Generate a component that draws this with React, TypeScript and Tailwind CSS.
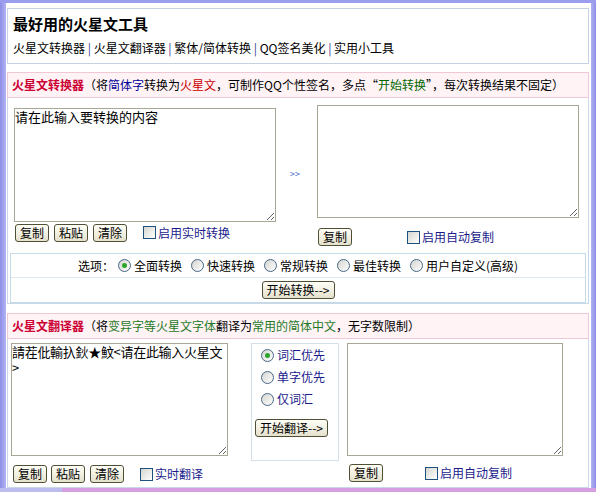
import React from 'react'

const cjk = "font-['Noto_Sans_CJK_SC','Noto_Sans',sans-serif]"

function Btn({ children, className = '' }: { children: React.ReactNode; className?: string }) {
  return (
    <button
      className={`h-[18px] px-[4px] rounded-[3px] border border-[#4f4f36] bg-linear-to-b from-[#fffff8] to-[#e4e1cc] text-[12px] leading-[14px] text-black ${className}`}
    >
      {children}
    </button>
  )
}

function Check({ label, className = '' }: { label: string; className?: string }) {
  return (
    <span className={`flex items-center gap-[2px] ${className}`}>
      <span className="w-[13px] h-[13px] border border-[#1c5180] bg-linear-to-br from-[#d6d6d0] to-white" />
      <span className="text-[12px] leading-[16px] text-[#1b1b8c]">{label}</span>
    </span>
  )
}

function Radio({ label, checked = false, tone = 'text-black' }: { label: string; checked?: boolean; tone?: string }) {
  return (
    <span className="flex items-center gap-[3px]">
      <span className="w-[13px] h-[13px] rounded-full border border-[#47678a] bg-linear-to-br from-[#d4d4ce] to-white flex items-center justify-center">
        {checked && <span className="w-[5px] h-[5px] rounded-full bg-[#2ca52c]" />}
      </span>
      <span className={`text-[12px] leading-[16px] ${tone}`}>{label}</span>
    </span>
  )
}

const area =
  "block border border-[#a4a894] bg-white p-0 text-[13px] leading-[16px] text-black outline-none font-['Noto_Sans_CJK_SC','Noto_Sans',sans-serif]"

export default function App() {
  return (
    <div className={`w-[596px] h-[492px] flex flex-col bg-white ${cjk}`}>
      <div className="h-[3px] bg-[#9d9df0]" />
      <div className="flex flex-1">
        <div className="w-[6px] bg-linear-to-r from-[#8d8de6] to-[#b3b3f3]" />

        <div className="flex-1 flex flex-col ml-[1px] mr-[2px]">
          {/* TOP */}
          <div className="mt-[5px] h-[56px] border border-[#c6d3e2] pl-[5px]">
            <div className="pt-[6px] text-[15px] leading-[18px] font-bold text-black">最好用的火星文工具</div>
            <div className="mt-[7px] text-[12px] leading-[16px] text-black">
              火星文转换器 <span className="text-[#3b3b8c]">|</span> 火星文翻译器{' '}
              <span className="text-[#3b3b8c]">|</span> 繁体/简体转换 <span className="text-[#3b3b8c]">|</span>{' '}
              QQ签名美化 <span className="text-[#3b3b8c]">|</span> 实用小工具
            </div>
          </div>

          {/* CONVERTER */}
          <div className="mt-[8px] h-[26px] border border-[#efc7d5] bg-[#fff3f6] pl-[4px] flex items-center text-[12px] leading-[16px] text-black whitespace-nowrap">
            <span className="font-bold text-[#cc0033]">火星文转换器</span>
            <span>（将</span>
            <span className="text-[#000099]">简体字</span>
            <span>转换为</span>
            <span className="text-[#cc0000]">火星文</span>
            <span>，可制作QQ个性签名，多点“</span>
            <span className="text-[#006600]">开始转换</span>
            <span>”，每次转换结果不固定）</span>
          </div>
          <div className="h-[206px] border border-t-0 border-[#c8d8e6] flex flex-col">
            <div className="h-[148px] flex items-start">
              <div className="ml-[6px] pt-[10px]">
                <textarea className={`${area} w-[262px] h-[114px]`} defaultValue="请在此输入要转换的内容" />
                <div className="mt-[1px] h-[19px] flex items-center">
                  <Btn className="ml-[1px]">复制</Btn>
                  <Btn className="ml-[5px]">粘贴</Btn>
                  <Btn className="ml-[5px]">清除</Btn>
                  <Check label="启用实时转换" className="ml-[16px]" />
                </div>
              </div>
              <div className="w-[41px] pt-[71px] pl-[14px] text-[9px] leading-[10px] text-[#3a66c4]">&gt;&gt;</div>
              <div className="pt-[7px]">
                <textarea className={`${area} w-[262px] h-[113px]`} />
                <div className="mt-[10px] h-[18px] flex items-center">
                  <Btn className="ml-[1px]">复制</Btn>
                  <Check label="启用自动复制" className="ml-[55px]" />
                </div>
              </div>
            </div>
            <div className="mt-[7px] mx-[2px] h-[50px] border border-[#c6dbe8] flex flex-col">
              <div className="h-[23px] flex items-center justify-center gap-[9px] text-[12px] leading-[16px] text-black">
                <span className="-mr-[5px]">选项：</span>
                <Radio label="全面转换" checked />
                <Radio label="快速转换" />
                <Radio label="常规转换" />
                <Radio label="最佳转换" />
                <Radio label="用户自定义(高级)" />
              </div>
              <div className="flex-1 border-t border-[#dbe6ee] flex items-center justify-center">
                <Btn className="px-[3px]">开始转换--&gt;</Btn>
              </div>
            </div>
          </div>

          {/* TRANSLATOR */}
          <div className="mt-[9px] h-[26px] border border-[#efc7d5] bg-[#fff3f6] pl-[4px] flex items-center text-[12px] leading-[16px] text-black whitespace-nowrap">
            <span className="font-bold text-[#cc0033]">火星文翻译器</span>
            <span>（将</span>
            <span className="text-[#1f7a1f]">变异字等火星文字体</span>
            <span>翻译为</span>
            <span className="text-[#1f7a1f]">常用的简体中文</span>
            <span>，无字数限制）</span>
          </div>
          <div className="h-[149px] border border-t-0 border-[#c8d8e6] flex items-start">
            <div className="ml-[3px] pt-[4px]">
              <textarea
                className={`${area} w-[217px] h-[113px] tracking-[-0.3px]`}
                defaultValue={'請茬仳輸扖鈥★魰<请在此输入火星文\n>'}
              />
              <div className="mt-[9px] h-[18px] flex items-center">
                <Btn className="ml-[2px]">复制</Btn>
                <Btn className="ml-[4px]">粘贴</Btn>
                <Btn className="ml-[5px]">清除</Btn>
                <Check label="实时翻译" className="ml-[16px]" />
              </div>
            </div>
            <div className="ml-[23px] mt-[4px] w-[88px] h-[118px] border border-[#d3e0ea] flex flex-col">
              <div className="pl-[9px] h-[22px] flex items-center">
                <Radio label="词汇优先" checked tone="text-[#1b1b8c]" />
              </div>
              <div className="pl-[9px] h-[22px] flex items-center">
                <Radio label="单字优先" tone="text-[#1b1b8c]" />
              </div>
              <div className="pl-[9px] h-[22px] flex items-center">
                <Radio label="仅词汇" tone="text-[#1b1b8c]" />
              </div>
              <div className="mt-[4px] pl-[3px]">
                <Btn className="px-[3px]">开始翻译--&gt;</Btn>
              </div>
            </div>
            <div className="ml-[8px] pt-[4px]">
              <textarea className={`${area} w-[216px] h-[113px]`} />
              <div className="mt-[8px] h-[18px] flex items-center">
                <Btn className="ml-[2px]">复制</Btn>
                <Check label="启用自动复制" className="ml-[42px]" />
              </div>
            </div>
          </div>
        </div>

        <div className="w-[5px] bg-linear-to-r from-[#b3b3f3] to-[#8d8de6]" />
      </div>
      <div className="h-[4px] flex">
        <div className="w-[62px] bg-[#bcbcf1]" />
        <div className="flex-1 bg-[#d49ee0]" />
      </div>
    </div>
  )
}
